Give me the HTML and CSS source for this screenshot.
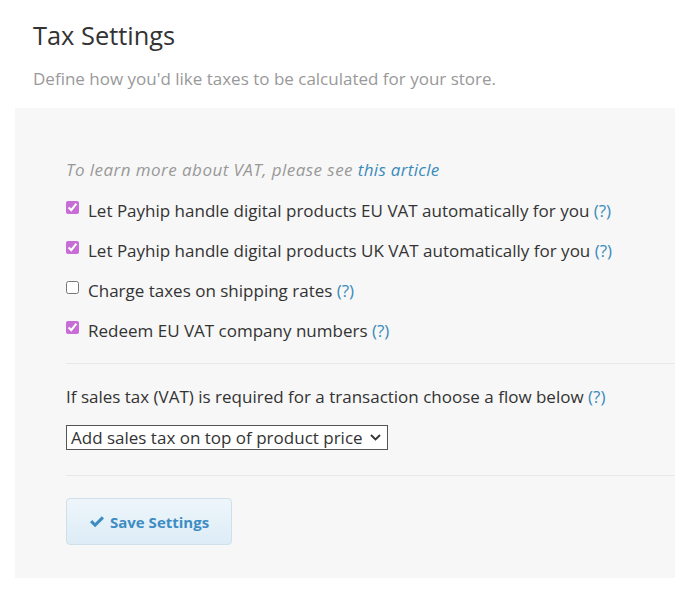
FILE: index.html
```html
<!DOCTYPE html>
<html lang="en">
<head>
	<meta charset="utf-8">
	<title>Tax Settings</title>
	<link rel="stylesheet" href="styles.css">
</head>
<body>
<div class="page">
	<h1>Tax Settings</h1>
	<p class="intro">Define how you'd like taxes to be calculated for your store.</p>

	<form class="panel">
		<p class="note">To learn more about VAT, please see <a href="#">this article</a></p>

		<label class="check"><input type="checkbox" checked>Let Payhip handle digital products EU VAT automatically for you <a href="#">(?)</a></label>
		<label class="check"><input type="checkbox" checked>Let Payhip handle digital products UK VAT automatically for you <a href="#">(?)</a></label>
		<label class="check"><input type="checkbox">Charge taxes on shipping rates <a href="#">(?)</a></label>
		<label class="check"><input type="checkbox" checked>Redeem EU VAT company numbers <a href="#">(?)</a></label>

		<hr>

		<p class="flow">If sales tax (VAT) is required for a transaction choose a flow below <a href="#">(?)</a></p>
		<div class="select">
			<span>Add sales tax on top of product price</span>
			<svg width="11" height="7" viewBox="0 0 11 7"><path d="M1 1 L5.5 5.5 L10 1" fill="none" stroke="#333" stroke-width="1.8"/></svg>
		</div>

		<hr class="last">

		<button type="button" class="save">
			<svg width="16" height="13" viewBox="0 0 15 13"><path d="M0.5 7.2 L2.7 5 L5.6 7.9 L12.3 1.2 L14.5 3.4 L5.6 12.3 Z" fill="#3d8dc4"/></svg>
			Save Settings
		</button>
	</form>
</div>
</body>
</html>
```

FILE: styles.css
```css
body {
	margin: 0;
	font-family: "Open Sans", sans-serif;
	font-size: 17px;
	color: #333;
	background: #fff;
}

.page {
	padding: 18px 0 0 15px;
}

h1 {
	margin: 0 0 0 18px;
	font-size: 25.4px;
	font-weight: 400;
	color: #333;
	line-height: 34px;
}

.intro {
	margin: 15px 0 0 18px;
	color: #999;
	line-height: 24px;
}

.panel {
	margin-top: 17px;
	background: #f7f7f7;
	padding: 50px 0 33px 51px;
}

a {
	color: #3a8bbb;
	text-decoration: none;
}

.note {
	margin: 0 0 8px;
	font-style: italic;
	letter-spacing: 0.45px;
	color: #999;
	line-height: 24px;
}

.note a {
	letter-spacing: 0.3px;
}

.check {
	display: flex;
	align-items: center;
	height: 40px;
	white-space: pre;
}

.check input {
	margin: 0 9px 0 0;
	width: 13px;
	height: 13px;
	accent-color: #c86dd7;
	position: relative;
	top: -3px;
}

hr {
	border: none;
	border-top: 1px solid #e8e8e8;
	margin: 13px 0 19px;
}

.flow {
	margin: 0 0 14px;
	line-height: 28px;
}

.select {
	display: inline-flex;
	align-items: center;
	gap: 7px;
	box-sizing: border-box;
	height: 25px;
	padding: 0 6px 0 4px;
	border: 1px solid #555;
	background: #fff;
}

hr.last {
	margin-top: 25px;
	margin-bottom: 22px;
}

.save {
	display: inline-flex;
	align-items: center;
	gap: 5px;
	height: 47px;
	padding: 0 22px;
	border: 1px solid #cfe0ea;
	border-radius: 4px;
	background: linear-gradient(#eef6fb, #ddecf6);
	color: #3d8dc4;
	font-family: "Open Sans", sans-serif;
	font-size: 15px;
	font-weight: 700;
}
```
